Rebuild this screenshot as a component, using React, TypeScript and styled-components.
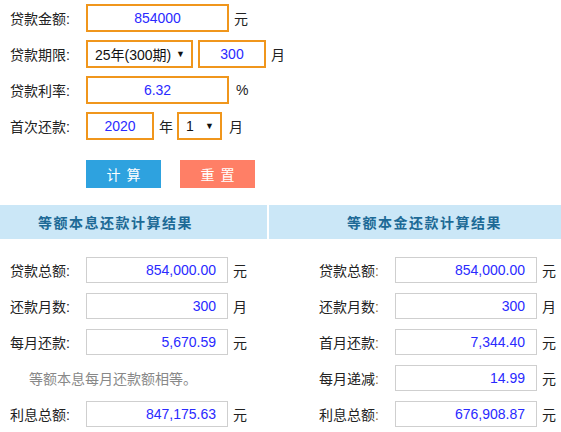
import React from 'react';
import styled, { createGlobalStyle } from 'styled-components';

const GlobalStyle = createGlobalStyle`
  html, body {
    margin: 0;
    padding: 0;
    background: #fff;
  }
  body {
    font-family: "Liberation Sans", "Noto Sans CJK SC", sans-serif;
    font-size: 14px;
    color: #222;
  }
`;

const Page = styled.div`
  width: 561px;
  height: 432px;
  overflow: hidden;
`;

const Form = styled.div`
  display: flex;
  flex-direction: column;
  gap: 8px;
  padding: 4px 0 0 10px;
`;

const Row = styled.div`
  display: flex;
  align-items: center;
  height: 28px;
`;

const Label = styled.span`
  width: 76px;
  flex-shrink: 0;
  font-size: 14px;
  color: #222;
`;

const Colon = styled.span<{ $tint?: boolean }>`
  color: ${(p) => (p.$tint ? '#9a6a2a' : '#222')};
`;

const Field = styled.input<{ $w: number }>`
  box-sizing: border-box;
  width: ${(p) => p.$w}px;
  height: 28px;
  border: 2px solid #f0961c;
  outline: none;
  padding: 0 4px;
  font-family: "Liberation Sans", "Noto Sans CJK SC", sans-serif;
  font-size: 14px;
  color: #2a2aff;
  text-align: center;
  background: #fff;
`;

const Picker = styled.div<{ $w: number }>`
  box-sizing: border-box;
  width: ${(p) => p.$w}px;
  height: 28px;
  border: 2px solid #f0961c;
  display: flex;
  align-items: center;
  justify-content: space-between;
  padding: 0 6px 0 7px;
  font-size: 14px;
  color: #111;
`;

const Arrow = styled.span`
  font-size: 9px;
  color: #111;
`;

const Unit = styled.span<{ $gap?: number }>`
  margin: 0 ${(p) => p.$gap ?? 0}px 0 5px;
  font-size: 14px;
  color: #222;
`;

const Buttons = styled.div`
  display: flex;
  gap: 19px;
  margin: 20px 0 0 86px;
`;

const Button = styled.button<{ $bg: string }>`
  width: 75px;
  height: 28px;
  border: none;
  background: ${(p) => p.$bg};
  color: #fff;
  font-family: "Noto Sans CJK SC", sans-serif;
  font-size: 14px;
  letter-spacing: 6px;
  padding: 0 0 0 6px;
`;

const Results = styled.div`
  display: flex;
  gap: 2px;
  margin-top: 17px;
`;

const Column = styled.div<{ $w: number; $pad: number }>`
  width: ${(p) => p.$w}px;
  flex-shrink: 0;
  display: flex;
  flex-direction: column;
  --pad: ${(p) => p.$pad}px;
`;

const Header = styled.div<{ $shift: number }>`
  height: 34px;
  background: #cbe7f7;
  color: #1d6a96;
  font-family: "Noto Sans CJK SC", sans-serif;
  font-weight: bold;
  font-size: 14px;
  letter-spacing: 1.5px;
  display: flex;
  align-items: center;
  padding-left: ${(p) => p.$shift}px;
`;

const List = styled.div`
  display: flex;
  flex-direction: column;
  gap: 10px;
  padding: 18px 0 0 var(--pad);
`;

const ResultRow = styled.div`
  display: flex;
  align-items: center;
  height: 26px;
`;

const Value = styled.div`
  box-sizing: border-box;
  width: 142px;
  height: 26px;
  border: 1px solid #cfcfcf;
  display: flex;
  align-items: center;
  justify-content: flex-end;
  padding-right: 11px;
  font-size: 14px;
  color: #2a2aff;
`;

const Note = styled.div`
  height: 26px;
  display: flex;
  align-items: center;
  padding-left: 19px;
  font-size: 14px;
  color: #888;
`;

type Item = { label: string; value: string; unit: string };

const left: Item[] = [
  { label: '贷款总额', value: '854,000.00', unit: '元' },
  { label: '还款月数', value: '300', unit: '月' },
  { label: '每月还款', value: '5,670.59', unit: '元' },
];

const right: Item[] = [
  { label: '贷款总额', value: '854,000.00', unit: '元' },
  { label: '还款月数', value: '300', unit: '月' },
  { label: '首月还款', value: '7,344.40', unit: '元' },
  { label: '每月递减', value: '14.99', unit: '元' },
  { label: '利息总额', value: '676,908.87', unit: '元' },
];

const ResultLine = ({ item, tint }: { item: Item; tint?: boolean }) => (
  <ResultRow>
    <Label>
      {item.label}
      <Colon $tint={tint}>:</Colon>
    </Label>
    <Value>{item.value}</Value>
    <Unit>{item.unit}</Unit>
  </ResultRow>
);

export default function App() {
  return (
    <Page>
      <GlobalStyle />
      <Form>
        <Row>
          <Label>贷款金额:</Label>
          <Field $w={143} value="854000" readOnly />
          <Unit>元</Unit>
        </Row>
        <Row>
          <Label>贷款期限:</Label>
          <Picker $w={107}>
            <span>25年(300期)</span>
            <Arrow>▼</Arrow>
          </Picker>
          <Field $w={68} value="300" readOnly style={{ marginLeft: 5 }} />
          <Unit>月</Unit>
        </Row>
        <Row>
          <Label>贷款利率:</Label>
          <Field $w={143} value="6.32" readOnly />
          <Unit style={{ marginLeft: 7 }}>%</Unit>
        </Row>
        <Row>
          <Label>首次还款:</Label>
          <Field $w={68} value="2020" readOnly />
          <Unit $gap={4}>年</Unit>
          <Picker $w={45}>
            <span>1</span>
            <Arrow>▼</Arrow>
          </Picker>
          <Unit style={{ marginLeft: 7 }}>月</Unit>
        </Row>
      </Form>
      <Buttons>
        <Button $bg="#2ea2df">计算</Button>
        <Button $bg="#ff7f66">重置</Button>
      </Buttons>
      <Results>
        <Column $w={267} $pad={10}>
          <Header $shift={38}>等额本息还款计算结果</Header>
          <List>
            {left.map((it) => (
              <ResultLine key={it.label} item={it} />
            ))}
            <Note>等额本息每月还款额相等。</Note>
            <ResultLine item={{ label: '利息总额', value: '847,175.63', unit: '元' }} />
          </List>
        </Column>
        <Column $w={292} $pad={50}>
          <Header $shift={78}>等额本金还款计算结果</Header>
          <List>
            {right.map((it) => (
              <ResultLine key={it.label} item={it} tint />
            ))}
          </List>
        </Column>
      </Results>
    </Page>
  );
}
